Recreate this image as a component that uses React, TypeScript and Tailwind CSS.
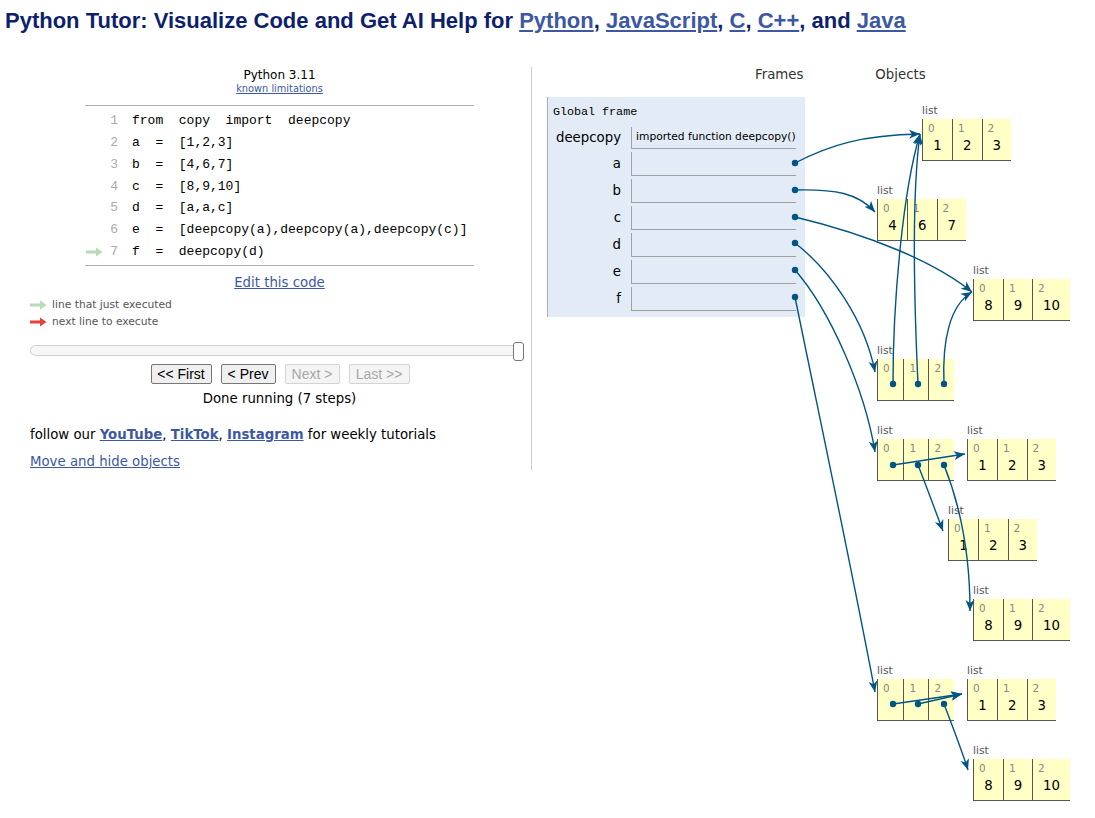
import type { ReactNode } from "react";

const verdana = { fontFamily: "'DejaVu Sans', Verdana, sans-serif" };

type Cell = { i: number; val?: string; w: string };

function HeapList({ pos, cells, ptrs }: { pos: string; cells: Cell[]; ptrs?: boolean }) {
  return (
    <div className={`absolute ${pos}`} style={verdana}>
      <div className="h-[16px] text-[10.7px] leading-[16px] text-[#555]">list</div>
      <div className="flex">
        {cells.map((c) => (
          <div key={c.i} className={`relative h-[42px] border-b border-l border-[#555] bg-[#ffffc6] ${c.w}`}>
            <span className="absolute left-[5px] top-[2px] text-[10.5px] leading-[14px] text-[#888]">{c.i}</span>
            {!ptrs && (
              <span className="absolute inset-x-0 top-[19px] text-center text-[13.3px] leading-[16px] text-black">{c.val}</span>
            )}
          </div>
        ))}
      </div>
    </div>
  );
}

const small = ["w-[30px]", "w-[29.5px]", "w-[29.5px]"];
const nums123: Cell[] = ["1", "2", "3"].map((v, i) => ({ i, val: v, w: small[i] }));
const nums467: Cell[] = ["4", "6", "7"].map((v, i) => ({ i, val: v, w: small[i] }));
const nums8910: Cell[] = [
  { i: 0, val: "8", w: "w-[30px]" },
  { i: 1, val: "9", w: "w-[29px]" },
  { i: 2, val: "10", w: "w-[38px]" },
];
const ptrCells: Cell[] = [
  { i: 0, w: "w-[26.4px]" },
  { i: 1, w: "w-[25px]" },
  { i: 2, w: "w-[25.3px]" },
];

const code: Array<[number, string]> = [
  [1, "from  copy  import  deepcopy"],
  [2, "a  =  [1,2,3]"],
  [3, "b  =  [4,6,7]"],
  [4, "c  =  [8,9,10]"],
  [5, "d  =  [a,a,c]"],
  [6, "e  =  [deepcopy(a),deepcopy(a),deepcopy(c)]"],
  [7, "f  =  deepcopy(d)"],
];

function Arrow({ color }: { color: string }) {
  return (
    <svg width="17" height="10" viewBox="0 0 17 10">
      <path d="M0 3.5 H10 V0.5 L16.5 5 L10 9.5 V6.5 H0 Z" fill={color} />
    </svg>
  );
}

function Link({ children, bold }: { children: ReactNode; bold?: boolean }) {
  return <a className={`text-[#3d58a2] underline ${bold ? "font-bold" : ""}`}>{children}</a>;
}

function Btn({ label, off, w }: { label: string; off?: boolean; w: string }) {
  return (
    <button
      className={`h-[20px] rounded-[2px] border text-[14px] leading-[18px] ${w} ${
        off ? "border-[#d4d4d4] bg-[#f4f4f4] text-[#a8a8a8]" : "border-[#767676] bg-[#efefef] text-black"
      }`}
      style={{ fontFamily: "'Liberation Sans', Arial, sans-serif" }}
    >
      {label}
    </button>
  );
}

const vars = ["a", "b", "c", "d", "e", "f"];
const ARROW = "#005583";

const paths = [
  "M795,163 C830,145 862,135 920,134",
  "M795,190 C835,189 858,193 875,212",
  "M795,217 C870,235 935,262 972,292",
  "M795,243 C830,270 865,320 875,372",
  "M795,270 C830,310 865,390 875,452",
  "M795,297 C818,410 850,560 875,692",
  "M893,384 C893,300 903,190 920,134",
  "M918,384 C915,320 911,200 920,134",
  "M944,384 C942,340 950,305 972,292",
  "M893,465 L965,454",
  "M918,465 C926,485 935,510 943,531",
  "M944,465 C958,500 970,550 970,611",
  "M893,704 L962,694",
  "M918,704 L962,694",
  "M944,704 C952,725 960,745 968,770",
];

const dots: Array<[number, number]> = [
  ...[163, 190, 217, 243, 270, 297].map((y) => [795, y] as [number, number]),
  ...[384, 465, 704].flatMap((y) => [893, 918, 944].map((x) => [x, y] as [number, number])),
];

export default function App() {
  return (
    <div className="relative h-[818px] w-[1095px] overflow-hidden bg-white text-black" style={verdana}>
      <h1
        className="pl-[5px] pt-[8px] text-[22px] font-bold leading-[26px] text-[#0e1f6e]"
        style={{ fontFamily: "'Liberation Sans', Arial, sans-serif" }}
      >
        Python Tutor: Visualize Code and Get AI Help for <Link>Python</Link>, <Link>JavaScript</Link>, <Link>C</Link>,{" "}
        <Link>C++</Link>, and <Link>Java</Link>
      </h1>

      <div className="mt-[33px] flex">
        {/* left: code + controls */}
        <div className="h-[403px] w-[532px] border-r border-[#ccc] pl-[30px] pr-[2px] pt-[1px]">
          <div className="text-center text-[12px] leading-[14px]">Python 3.11</div>
          <div className="mt-[1px] text-center text-[9.8px] leading-[12px]">
            <Link>known limitations</Link>
          </div>
          <div
            className="ml-[55px] mt-[10px] w-[389px] border-b border-t border-[#b0b0b0] pb-[2px] pt-[4px]"
            style={{ fontFamily: "'Liberation Mono', 'Courier New', monospace" }}
          >
            {code.map(([n, line]) => (
              <div key={n} className="flex h-[21.8px] items-center text-[13px]">
                <span className="flex w-[19px] items-center pl-[1px]">{n === 7 && <Arrow color="#b6dcb6" />}</span>
                <span className="w-[14px] text-right text-[#aaa]">{n}</span>
                <span className="ml-[14px] whitespace-pre">{line}</span>
              </div>
            ))}
          </div>
          <div className="mt-[9px] text-center text-[13.3px] leading-[16px]">
            <Link>Edit this code</Link>
          </div>
          <div className="mt-[6px] flex h-[16px] items-center gap-[5px] text-[10.7px] text-[#555]">
            <Arrow color="#b6dcb6" />
            line that just executed
          </div>
          <div className="mt-[1px] flex h-[16px] items-center gap-[5px] text-[10.7px] text-[#555]">
            <Arrow color="#e8413a" />
            next line to execute
          </div>
          <div className="relative mt-[12px] h-[20px]">
            <div className="absolute left-0 right-[10px] top-[3px] h-[11px] rounded-full border border-[#d0d0d0] bg-[#f6f6f6]" />
            <div className="absolute right-[5px] top-0 h-[19px] w-[11px] rounded-[3px] border border-[#777] bg-white" />
          </div>
          <div className="mt-[2px] flex justify-center gap-[9px] pl-[1px]">
            <Btn label="<< First" w="w-[61px]" />
            <Btn label="< Prev" w="w-[55px]" />
            <Btn label="Next >" w="w-[55px]" off />
            <Btn label="Last >>" w="w-[61px]" off />
          </div>
          <div className="mt-[7px] text-center text-[13.3px] leading-[16px]">Done running (7 steps)</div>
          <div className="mt-[20px] text-[13.3px] leading-[16px]">
            follow our <Link bold>YouTube</Link>, <Link bold>TikTok</Link>, <Link bold>Instagram</Link> for weekly
            tutorials
          </div>
          <div className="mt-[11px] text-[13.3px] leading-[16px]">
            <Link>Move and hide objects</Link>
          </div>
        </div>

        {/* right: frames */}
        <div className="flex-1">
          <div className="flex h-[16px] text-[13.3px] leading-[16px] text-[#333]">
            <span className="ml-[223px]">Frames</span>
            <span className="ml-[72px]">Objects</span>
          </div>
          <div className="ml-[15px] mt-[14px] w-[258px] border-l border-[#a8b0b8] bg-[#e2ebf6] pb-[6px] pt-[8px]">
            <div
              className="pl-[5px] text-[11.7px] leading-[14px]"
              style={{ fontFamily: "'Liberation Mono', 'Courier New', monospace" }}
            >
              Global frame
            </div>
            <div className="mt-[8px] flex h-[22px] items-center">
              <span className="w-[73px] text-right text-[13.3px]">deepcopy</span>
              <span className="ml-[10px] flex h-[22px] w-[165px] items-center border-b border-l border-[#a0a0a0] pl-[4px] text-[10.7px]">
                imported function deepcopy()
              </span>
            </div>
            {vars.map((v) => (
              <div key={v} className="mt-[3px] flex h-[24px] items-center">
                <span className="w-[73px] text-right text-[13.3px]">{v}</span>
                <span className="ml-[10px] h-[24px] w-[165px] border-b border-l border-[#a0a0a0]" />
              </div>
            ))}
          </div>
        </div>
      </div>

      {/* heap objects */}
      <HeapList pos="left-[922px] top-[103px]" cells={nums123} />
      <HeapList pos="left-[877px] top-[183px]" cells={nums467} />
      <HeapList pos="left-[973px] top-[263px]" cells={nums8910} />
      <HeapList pos="left-[877px] top-[343px]" cells={ptrCells} ptrs />
      <HeapList pos="left-[877px] top-[423px]" cells={ptrCells} ptrs />
      <HeapList pos="left-[967px] top-[423px]" cells={nums123} />
      <HeapList pos="left-[948px] top-[503px]" cells={nums123} />
      <HeapList pos="left-[973px] top-[583px]" cells={nums8910} />
      <HeapList pos="left-[877px] top-[663px]" cells={ptrCells} ptrs />
      <HeapList pos="left-[967px] top-[663px]" cells={nums123} />
      <HeapList pos="left-[973px] top-[743px]" cells={nums8910} />

      <svg className="pointer-events-none absolute left-0 top-0" width="1095" height="818">
        <defs>
          <marker id="ah" markerUnits="userSpaceOnUse" markerWidth="12" markerHeight="10" refX="11" refY="5" orient="auto">
            <path d="M0,0.5 L11,5 L0,9.5 L3,5 Z" fill={ARROW} />
          </marker>
        </defs>
        {paths.map((d) => (
          <path key={d} d={d} fill="none" stroke={ARROW} strokeWidth="1.4" markerEnd="url(#ah)" />
        ))}
        {dots.map(([x, y]) => (
          <circle key={`${x}-${y}`} cx={x} cy={y} r="3.2" fill={ARROW} />
        ))}
      </svg>
    </div>
  );
}
